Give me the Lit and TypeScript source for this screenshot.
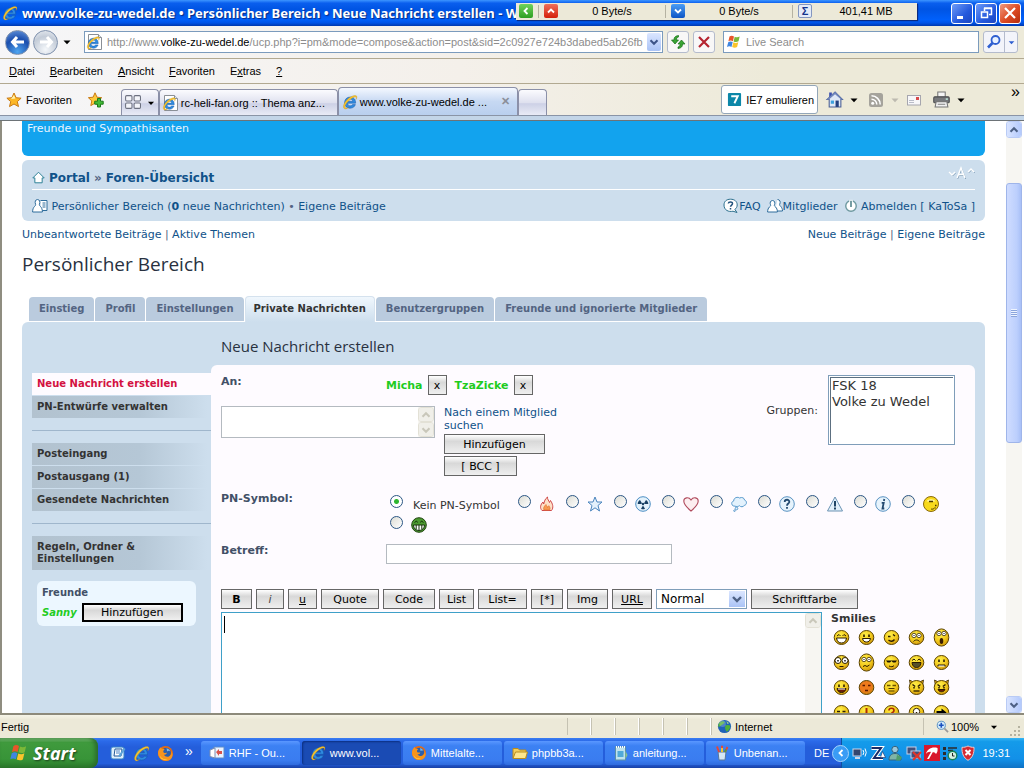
import { LitElement, html, svg, css, nothing } from "lit";
import { customElement, property } from "lit/decorators.js";
import { classMap } from "lit/directives/class-map.js";

/* ---------- shared icon shapes ---------- */

const ieGlyph = svg`
  <path d="M13.6 9.200H5.600c.1 1.700 1.200 2.600 2.700 2.600 1 0 1.800-.4 2.300-1.200h2.800c-.8 2.200-2.600 3.600-5.200 3.600-3.300 0-5.600-2.200-5.600-5.500S4.900 3 8.200 3c3.400 0 5.600 2.400 5.400 6.200zM5.700 7.300h5c-.1-1.400-1.100-2.200-2.500-2.200s-2.300.8-2.500 2.200z" fill="#2f8be0" stroke="#1457a8" stroke-width=".5"/>
  <path d="M2.200 14.600C-.2 12.400 3.400 6.200 8 3.300c3.200-2 6.300-2.400 6.800-1 .3.900-.1 2-.8 3.100.3-1.300.3-2-.3-2.300-1.100-.5-4.300 1-7 3.700-3.200 3.100-4.500 6.300-3 7.200.6.300 1.700 0 2.900-.8-1.600 1.500-3.300 2.300-4.400 1.400z" fill="#f7c530" stroke="#b98212" stroke-width=".3"/>`;

const pageIe = svg`
  <path d="M1.500.5h10l3 3v12h-13z" fill="#fff" stroke="#8a8f96"/>
  <path d="M11.500.5v3h3" fill="#dfe6ee" stroke="#8a8f96"/>
  <g transform="translate(-1 1.500) scale(.9)">${ieGlyph}</g>`;

const flag = svg`
  <path d="M3.500 2.500C5 1.300 6.500 1.500 8 2.400L6.900 7.200C5.500 6.400 4 6.300 2.400 7.300z" fill="#e8562a"/>
  <path d="M8.700 2.700c1.600.8 3.100.9 5-.2l-1.200 4.800c-1.700 1-3.200.9-4.900.1z" fill="#7cb838"/>
  <path d="M2.200 8.200c1.600-1 3-.9 4.500-.1l-1.200 4.900c-1.500-.9-3-.9-4.500 0z" fill="#3f86e0"/>
  <path d="M7.400 8.300c1.600.8 3.100.9 4.900-.1l-1.200 4.900c-1.800 1-3.300.8-4.900 0z" fill="#fbc52c"/>`;

const firefox = svg`
  <circle cx="8" cy="8" r="7" fill="#e66a12"/>
  <circle cx="8.500" cy="7.300" r="4.600" fill="#2a5fae"/>
  <path d="M9 3c1.500.3 3 1.500 3.500 3-1-.7-2-.6-3 0z" fill="#7db7e8"/>
  <path d="M1.300 5.500C2 3.600 3 2.500 3.800 2c0 .7.400 1.300 1 1.700 1.400-.2 2 .1 2.300.7C5.800 5 5.600 6 6.400 7.200c1 .5 2 .2 2.900.2-.2 1.400-1.300 2-2.800 1.800 1 1.900 4 2.600 6 .6 1-1 1.200-2.700.8-4.200 1.500 2 1.800 4.300.7 6.400-1.600 2.900-5.400 3.700-8.500 2.400C2 13 .3 9.300 1.300 5.500z" fill="#f7941d"/>
  <path d="M2.500 9.500c1 3 4 4.700 7.500 3.700-2.500 1.800-7 .8-7.500-3.700z" fill="#fcd34a"/>`;

const globe = svg`
  <circle cx="8" cy="8" r="7" fill="#1f62b8"/>
  <path d="M3 3.500C5 2 7 2 8 3S6.500 5.500 5 6.500 3 9 1.300 8C1.200 6 2 4.500 3 3.500zM9 7c2-1 4-.5 5 0 .5 3-1 5-3.500 6.500C9 12 8 10 9 7z" fill="#4fae3c"/>
  <path d="M10 2l3 2.500-2 .8z" fill="#9fd28a"/>
  <circle cx="6" cy="5" r="3.500" fill="#fff" opacity=".22"/>`;

const icons: Record<string, unknown> = {
  ie: ieGlyph,
  pageIe,
  flag,
  firefox,
  globe,
  star: svg`<path d="M8 1l2.100 4.700 5 .5-3.800 3.400 1.200 5L8 12l-4.500 2.600 1.200-5L.9 6.200l5-.5z" fill="#fdb827" stroke="#c97a14"/><path d="M8 3l1.300 3.400L5 7z" fill="#fff3b0"/>`,
  addStar: svg`<path d="M7 .8l2 4.400 4.700.5-3.500 3.200 1 4.700L7 11.200l-4.200 2.400 1-4.700L.4 5.700l4.700-.5z" fill="#fdc93a" stroke="#c97a14"/><path d="M9.500 6.500h3v2.700h2.700v3h-2.700V15h-3v-2.800H6.700v-3h2.800z" fill="#42bb35" stroke="#1c7a18"/>`,
  quad: svg`<g fill="#f4f5fa" stroke="#6d7180"><rect x="1.500" y="1.500" width="6" height="5" rx="1"/><rect x="9.500" y="1.500" width="6" height="5" rx="1"/><rect x="1.500" y="8.500" width="6" height="5" rx="1"/><rect x="9.500" y="8.500" width="6" height="5" rx="1"/></g>`,
  caret: svg`<path d="M4.500 6.500h7L8 10.200z" fill="currentColor"/>`,
  chevDown: svg`<path d="M4 6l4 4 4-4" fill="none" stroke="currentColor" stroke-width="2.400"/>`,
  chevUp: svg`<path d="M4 10l4-4 4 4" fill="none" stroke="currentColor" stroke-width="2.400"/>`,
  chevLeft: svg`<path d="M10 4L6 8l4 4" fill="none" stroke="currentColor" stroke-width="2.400"/>`,
  refresh: svg`<path d="M8.500 1.500C5 2 4 3.500 4 6H1.500L5 10l3.500-4H6.300c0-1.500.7-2.500 2.200-3z" fill="#3aa535" stroke="#146b16" stroke-width=".7"/><path d="M8 14.500c3.500-.5 4.500-2 4.500-4.500H15l-3.500-4L8 10h2.200c0 1.500-.7 2.500-2.200 3z" fill="#3aa535" stroke="#146b16" stroke-width=".7"/>`,
  stop: svg`<path d="M3 3l10 10M13 3L3 13" stroke="#b52430" stroke-width="2.200"/>`,
  search: svg`<circle cx="9.500" cy="6" r="4" fill="#e8f1ff" stroke="#2f5fd0" stroke-width="1.800"/><path d="M6.500 9L2 13.500" stroke="#2f5fd0" stroke-width="2.600"/>`,
  seven: svg`<rect x="1" y="1" width="14" height="14" rx="1" fill="#0c87a8"/><path d="M4.500 4.500h7l-3.600 7.500" fill="none" stroke="#fff" stroke-width="2"/>`,
  home: svg`<path d="M3 1.500h2.500V5L3 7z" fill="#3a4fb0"/><path d="M8.500 1L1 8h2v7h11V8h1.500z" fill="#dfe8f6" stroke="#4a5f95"/><path d="M8.500.8L.5 8.200h2L8.500 3l6 5.200h1.300z" fill="#7086bd"/><rect x="9" y="9" width="3" height="6" fill="#23407f"/><rect x="4.500" y="9" width="3" height="3" fill="#3ca0dd"/>`,
  rss: svg`<rect x="1" y="1" width="14" height="14" rx="2.500" fill="#a5a39c"/><circle cx="4.700" cy="11.300" r="1.500" fill="#fff"/><path d="M3.500 7.200a5.300 5.300 0 0 1 5.300 5.300M3.500 3.800a8.700 8.700 0 0 1 8.700 8.700" fill="none" stroke="#fff" stroke-width="1.500"/>`,
  mail: svg`<rect x="1.500" y="3.500" width="13" height="9.500" fill="#f7f7f9" stroke="#a6a6ae"/><rect x="10" y="5" width="3" height="3" fill="#d84a4a"/><path d="M3 8.500h5M3 10.500h5" stroke="#b9bcc8"/>`,
  printer: svg`<path d="M4.500 1h7v5h-7z" fill="#f5f5f5" stroke="#777"/><rect x=".7" y="5.500" width="14.600" height="5.500" rx="1" fill="#77797c" stroke="#4c4e50"/><path d="M3 10h10l1 5H2z" fill="#f1f1f1" stroke="#777"/><path d="M4.500 12.500h7" stroke="#888"/><rect x="12" y="7" width="2" height="1.200" fill="#cfe"/>`,
  portal: svg`<path d="M8 1.500L1 8.500h2.500v6h9v-6H15z" fill="#fff" stroke="#2b7f95" stroke-width="1.200" stroke-linejoin="round"/>`,
  ucp: svg`<path d="M8.500 2.500h6.500v10H9" fill="#fff" stroke="#2f6d9c"/><path d="M10.500 5h3M10.500 7h3M10.500 9h3" stroke="#2f6d9c"/><path d="M5.500 1.500C3.300 1.500 2.700 4 3.500 6c.4 1 0 1.600-1 2.500C1.300 9.700.6 11.500.6 14h9.800c0-2.500-.7-4.300-1.900-5.500-1-.9-1.400-1.500-1-2.500.8-2 .2-4.500-2-4.500z" fill="#fff" stroke="#2f6d9c"/>`,
  faq: svg`<path d="M7.500 1.200c4 0 6.700 2.200 6.700 5.700 0 2-1 3.600-2.400 4.500L14 14.500l-4-1.300c-4.500 1-9-1-9-6.200 0-3.500 2.500-5.800 6.500-5.800z" fill="#fff" stroke="#2b6f8d"/><path d="M5.300 5.500C5.500 3.500 9.700 3.500 9.500 5.700 9.400 7 7.500 7.200 7.500 8.800M7.500 10v1.400" fill="none" stroke="#23527c" stroke-width="1.500"/>`,
  members: svg`<path d="M10.500 1.500c2.600 0 3.200 2.500 2.300 4.500-.5 1 0 1.500 1 2.500 1 1.200 1.700 2.500 1.700 4.500H8" fill="#fff" stroke="#2f6d9c"/><path d="M5.500 2.500C3.300 2.500 2.700 5 3.500 6.700c.4 1 0 1.400-1 2.300C1.300 10 .6 11.700.6 14h9.800c0-2.300-.7-4-1.900-5-1-.9-1.400-1.300-1-2.300.8-1.700.2-4.200-2-4.200z" fill="#fff" stroke="#2f6d9c"/>`,
  power: svg`<circle cx="8" cy="8" r="6" fill="#fff" stroke="#6e99a0" stroke-width="1.600"/><path d="M8 1v8" stroke="#fff" stroke-width="4"/><path d="M8 2v7" stroke="#3c737c" stroke-width="1.600"/>`,
  fire: svg`<path d="M3 14.500C.5 12 1.500 8.500 4 6l.7 2C5.500 5 6 3 8.500 1c-.3 2.500 1.500 3.500 2 5.500l1-2c2 3 3.500 7 1 10z" fill="#fde0c8" stroke="#cf4a4a"/><path d="M5 14c-1.200-2 .5-4 2-5.500.3 1.500 1.500 1.500 1.500 3l1.300-1.800C11 11 11.500 13 10.500 14z" fill="#f79a52" stroke="#e07232" stroke-width=".7"/>`,
  starOutline: svg`<path d="M8 1l2 5h5l-4 3.500 1.500 5.500L8 11.800 3.500 15 5 9.500 1 6h5z" fill="#e4f1fc" stroke="#4a84bd" stroke-linejoin="round"/>`,
  radioactive: svg`<circle cx="8" cy="8" r="7.300" fill="#e3f1fb" stroke="#4d8fc4"/><circle cx="8" cy="8" r="1.200" fill="#173f63"/><path d="M7 7.200L5 4C3.500 5 2.700 6.300 2.700 8H6.300zM9 7.200L11 4c1.500 1 2.300 2.300 2.300 4H9.700zM8 9.500l2 3.300c-1.300.7-2.700.7-4 0z" fill="#173f63"/>`,
  heart: svg`<path d="M8 15C5 12.500.8 8.500.8 5 .8 1.500 5.700.5 8 4c2.300-3.500 7.200-2.500 7.200 1 0 3.500-4.200 7.500-7.200 10z" fill="#fdeef0" stroke="#b04a5c" stroke-width="1.100"/>`,
  thought: svg`<path d="M4 10.200C0 10.500-.3 5.500 2.700 5 2.500 1.500 7 .5 8.500 2c2.500-1.200 5 0 5 2 2.700.8 2.500 5 0 5.200-1 2-4 2-5 .5-1.500 1-3 1-4.500.5z" fill="#e3f2fd" stroke="#5a9bcd"/><circle cx="5.500" cy="12.500" r="1.300" fill="#e3f2fd" stroke="#5a9bcd"/><circle cx="3.500" cy="14.700" r=".8" fill="none" stroke="#5a9bcd"/>`,
  question: svg`<circle cx="8" cy="8" r="7.300" fill="#e6f3fc" stroke="#5a93c2"/><path d="M5.700 6C5.700 3 10.500 3 10.300 6 10.200 7.600 8 7.500 8 9.700M8 11v1.800" fill="none" stroke="#234a70" stroke-width="1.800"/>`,
  warning: svg`<path d="M8 1L15.500 15H.5z" fill="#e2f0fa" stroke="#6d94b4" stroke-linejoin="round"/><path d="M8 5v5.500M8 11.500v2" stroke="#173b5d" stroke-width="1.900"/>`,
  info: svg`<circle cx="8" cy="8" r="7.300" fill="#e6f3fc" stroke="#5a93c2"/><path d="M9.300 3l-.4 2M6.700 6.800h2L7.500 12.500h1.800" fill="none" stroke="#234a70" stroke-width="1.800"/>`,
  dizzy: svg`<circle cx="8" cy="8" r="7.500" fill="#f8d91c" stroke="#8a6a0a"/><path d="M3.500 5.500C5 2.500 11 2.500 12.500 5.500z" fill="#fff6a0"/><path d="M6 5.500h4" stroke="#4a3800" stroke-width="1.500"/><path d="M12 9.500h1.500M11.500 12h1" stroke="#4a3800" stroke-width="1.400"/><path d="M8 13c1 .3 2 .2 3-.5" stroke="#4a3800" fill="none"/>`,
  greenGrin: svg`<circle cx="8" cy="8" r="7.300" fill="#4c9a30" stroke="#20440f"/><path d="M3.500 5.500l2-1.500 1 1.500M9.500 5.500l1-1.500 2 1.500" stroke="#16330b" fill="none"/><path d="M2.500 8h11c0 3-2 5.500-5.500 5.500S2.500 11 2.500 8z" fill="#fff" stroke="#16330b"/><path d="M5.200 8v4.500M8 8v5M10.800 8v4.500" stroke="#16330b"/>`,
  magnify: svg`<circle cx="6.500" cy="6.500" r="5" fill="#d4ecfa" stroke="#5a90c0" stroke-width="1.200"/><path d="M10.300 10.300l4.500 4.500" stroke="#9a9a9a" stroke-width="2.200"/><path d="M3.500 6.500h6M6.500 3.500v6" stroke="#1c52c0" stroke-width="2"/>`,
  desktop: svg`<rect x="1" y="2" width="13" height="12" rx="2" fill="#dff0fb" stroke="#3682c4"/><path d="M5 4h7l-1 7H4z" fill="#fff" stroke="#245b99"/><path d="M6 6h4M6 8h4" stroke="#4b86c6"/><path d="M8 11l6-8 1.500 1-5.500 8z" fill="#5ba3da"/>`,
  outlook: svg`<rect x="5" y="2" width="10" height="11" fill="#e9f3ff" stroke="#5d8ccc"/><path d="M1 5l5-2v10l-5-1.500z" fill="#fff" stroke="#7a8db0"/><path d="M7 7l3-3v2h3v3h-3v2z" fill="#d9534a"/>`,
  folder: svg`<path d="M1 3.500h5l1.500 1.500H14V13H1z" fill="#f3cf5c" stroke="#b88b1e"/><path d="M3.500 7h12L13.500 13.500H1z" fill="#fde68d" stroke="#b88b1e"/>`,
  notepad: svg`<rect x="2.500" y="2" width="10" height="13" fill="#bfe2ee" stroke="#5b8fa6"/><path d="M3.500 1v2M5.500 1v2M7.500 1v2M9.500 1v2M11.500 1v2" stroke="#fff"/><path d="M4.500 6h6v6h-6z" fill="#51a9d8"/><path d="M12.500 6l2 4-2 4z" fill="#8bc48b"/>`,
  paint: svg`<path d="M4 7h8l-1 8H5z" fill="#d5e6f5" stroke="#57769c"/><path d="M5 7L3 1.500M8 7V.8M11 7l2.500-5" stroke="#e3483b" stroke-width="2"/><path d="M8 7V3" stroke="#f0c330" stroke-width="2"/><path d="M11 7l1-2.500" stroke="#46a04a" stroke-width="2"/>`,
  network: svg`<rect x="1" y="4" width="8" height="7" fill="#34466e" stroke="#cbd6ea"/><path d="M3 13h5" stroke="#cbd6ea" stroke-width="2"/><path d="M11 5q1.500 2.500 0 5M13 3.500q2.500 4 0 8" stroke="#fff" fill="none"/>`,
  zed: svg`<path d="M1.500 3h9.500L4 13h9" fill="none" stroke="#fff" stroke-width="4"/><path d="M1.500 3h9.500L4 13h9" fill="none" stroke="#1a2b66" stroke-width="2"/><path d="M12.500 6.500l3 6h-5z" fill="#fff" stroke="#1a2b66" stroke-width=".6"/>`,
  buddy: svg`<circle cx="7" cy="4.500" r="3.200" fill="#9cc8dc" stroke="#35627c"/><path d="M1 15c0-4 2-6.500 6-6.500s6 2.500 6 6.500z" fill="#7fb5a8" stroke="#35627c"/><path d="M9 10l5 2-2 3.500H8z" fill="#4f9d6c"/>`,
  netOff: svg`<rect x="1" y="2" width="9" height="7" fill="#41517c" stroke="#c5d0e8"/><rect x="5" y="6" width="9" height="7" fill="#41517c" stroke="#c5d0e8"/><path d="M7 7l8 8M15 7l-8 8" stroke="#e0362c" stroke-width="2.200"/>`,
  umbrella: svg`<rect width="16" height="16" fill="#d8182c"/><path d="M2 9C3 4 8 1.500 13.500 3 14 6 13 8 12 9c-1-1.500-2-2-3.300-1.700L5 14H3l4-7C5 6.500 3 7.500 2 9z" fill="#fff"/>`,
  tasks: svg`<path d="M1 2h3v3H1zM1 7h3v3H1zM1 12h3v3H1z" fill="#2c2c2c"/><path d="M6 3h9M6 5.500h5" stroke="#2c2c2c" stroke-width="1.500"/><circle cx="10.500" cy="10.500" r="4.300" fill="#d7f0e2" stroke="#19825a" stroke-width="1.400"/><path d="M10.500 8v3h2" stroke="#222" fill="none"/>`,
  shield: svg`<path d="M8 1c2 1 4 1.500 6 1.300.3 6-1.500 10.500-6 13-4.500-2.500-6.300-7-6-13C4 2.500 6 2 8 1z" fill="#d62a32" stroke="#f0c8c8"/><path d="M5.500 5l5 5M10.500 5l-5 5" stroke="#fff" stroke-width="2"/>`,
};

@customElement("ui-icon")
export class UiIcon extends LitElement {
  @property() name = "";
  @property({ type: Number }) size = 16;
  static styles = css`
    :host { display: inline-flex; flex: none; }
    svg { display: block; overflow: visible; }
  `;
  render() {
    return html`<svg width=${this.size} height=${this.size} viewBox="0 0 16 16" aria-hidden="true">${icons[this.name] ?? nothing}</svg>`;
  }
}

/* ---------- smilies ---------- */

interface Smiley { label: string; fill?: string; tall?: boolean; horns?: boolean; features: unknown; }

const roundEyes = svg`<circle cx="6" cy="6.500" r="2.200" fill="#fff" stroke="#3a2a00" stroke-width=".8"/><circle cx="11" cy="6.500" r="2.200" fill="#fff" stroke="#3a2a00" stroke-width=".8"/><path d="M6 6v1M11 6v1" stroke="#000"/>`;
const dots = svg`<path d="M6 5.500v2.500M11 5.500v2.500" stroke="#2b1c00" stroke-width="1.600"/>`;
const angry = svg`<path d="M4.500 5.500l2.700 2M12.500 5.500l-2.700 2M6 8v1.500M11 8v1.500" stroke="#2b1c00" stroke-width="1.500"/>`;

const smilies: Smiley[] = [
  { label: "Sehr glücklich", features: svg`<path d="M4 7l2-1.500L7.500 7M9.500 7L11 5.500 13 7" fill="none" stroke="#2b1c00"/><path d="M3.500 9h10c-.5 3.500-2.500 5-5 5s-4.500-1.500-5-5z" fill="#fff" stroke="#2b1c00"/>` },
  { label: "Lächeln", features: svg`${dots}<path d="M4.500 9.500h8c-.5 2.500-2 3.500-4 3.500s-3.500-1-4-3.500z" fill="#fff" stroke="#2b1c00"/>` },
  { label: "Zwinkern", features: svg`<path d="M5 7.500h2.500M10 5.500l2 1.500M5.500 11c2 2 4.500 1.500 6-.5" fill="none" stroke="#2b1c00" stroke-width="1.300"/>` },
  { label: "Traurig", features: svg`${roundEyes}<path d="M5.500 12.500c1.500-2 4.500-2 6 0" fill="none" stroke="#2b1c00"/>` },
  { label: "Überrascht", tall: true, features: svg`<g transform="translate(0 -2)">${roundEyes}</g><ellipse cx="8.500" cy="12" rx="1.800" ry="3" fill="#3a1c00"/>` },
  { label: "Schock", features: svg`<circle cx="5" cy="6.500" r="3" fill="#fff" stroke="#2b1c00"/><circle cx="12" cy="6.500" r="3" fill="#fff" stroke="#2b1c00"/><path d="M5 6v1.500M12 6v1.500" stroke="#000" stroke-width="1.400"/><path d="M6.500 12.500h4" stroke="#2b1c00"/>` },
  { label: "Verwirrt", tall: true, features: svg`<g transform="translate(0 -1)">${roundEyes}</g><path d="M5 12.500l2-1 2 1 2.500-1.500" fill="none" stroke="#2b1c00"/>` },
  { label: "Fetzig", features: svg`<path d="M3 6.500h11l-1.500 2h-2.500L8.500 7 7 8.500H4.500z" fill="#1c1200"/><path d="M6 12c2 1 4 1 5-.5" fill="none" stroke="#2b1c00"/>` },
  { label: "Lachend", features: svg`<path d="M4 6.500l2-1.500 1.500 1.500M9.500 6.500L11 5l2 1.500" fill="none" stroke="#2b1c00"/><path d="M4 8.500h9c-.5 4-2.500 5-4.500 5s-4-1-4.500-5z" fill="#56502a" stroke="#2b1c00"/>` },
  { label: "Verärgert", features: svg`${dots}<path d="M5 12.500V11h7v1.500" fill="#fff" stroke="#2b1c00"/>` },
  { label: "Zunge", features: svg`${dots}<path d="M4 9.500h9c-.5 2.500-2 4-4.500 4s-4-1.500-4.500-4z" fill="#6b1c08" stroke="#2b1c00"/><path d="M5 10h7" stroke="#fff"/>` },
  { label: "Verlegen", fill: "#ee7a1c", features: svg`<path d="M4.500 6.500h2.500M10 6.500h2.500M7 11.500h3" stroke="#5b1a00" stroke-width="1.500"/>` },
  { label: "Augen verdrehend", features: svg`<path d="M4 6.500h3.500M9.500 6.500H13" stroke="#6b5200" stroke-width="1.500"/><path d="M5.500 12h6M5.500 9.500h6" stroke="#4b3800"/>` },
  { label: "Teuflisch", horns: true, features: svg`${angry}<path d="M5.500 12h6" stroke="#2b1c00" stroke-width="1.300"/>` },
  { label: "Verrückter Teufel", horns: true, features: svg`${angry}<path d="M5 10.500c1 3 6 3 7 0z" fill="#6b1c08" stroke="#2b1c00"/>` },
  { label: "Neutral", features: svg`<path d="M4 7.500h3M9.500 7.500h3M5.500 11.500h6" stroke="#2b1c00" stroke-width="1.300"/>` },
  { label: "Ausruf", features: svg`<path d="M8.500 4v5.500M8.500 11v2" stroke="#b02a00" stroke-width="2"/>` },
  { label: "Frage", features: svg`<path d="M6 6.500c0-3 5-3 5 0 0 2-2.500 2-2.500 3.500M8.500 11.500V13" stroke="#b02a00" stroke-width="1.700" fill="none"/>` },
  { label: "Idee", features: svg`<circle cx="8.500" cy="7.500" r="3.200" fill="#fff" stroke="#2b1c00"/><path d="M8.500 8v5" stroke="#2b1c00" stroke-width="1.500"/>` },
  { label: "Pfeil", features: svg`<path d="M3.500 8.500h6" stroke="#000" stroke-width="3"/><path d="M8.500 4.500l5 4-5 4z"/>` },
];

@customElement("smiley-face")
export class SmileyFace extends LitElement {
  @property({ attribute: false }) face!: Smiley;
  static styles = css`
    :host { display: block; }
    svg { display: block; overflow: visible; }
  `;
  render() {
    const f = this.face;
    return html`<svg width="17" height="17" viewBox="0 0 17 17" role="img" aria-label=${f.label}>
      <defs><radialGradient id="g" cx=".4" cy=".3" r=".8"><stop offset="0" stop-color=${f.fill ?? "#fff04a"}/><stop offset=".55" stop-color=${f.fill ?? "#f2c81c"}/><stop offset="1" stop-color="#c48a08"/></radialGradient></defs>
      ${f.horns ? svg`<path d="M1.500 1l5 2.500-4 4zM15.500 1l-5 2.500 4 4z" fill="#d8a012" stroke="#3a2a00" stroke-width=".8"/>` : nothing}
      <ellipse cx="8.500" cy="8.500" rx="7.300" ry=${f.tall ? 8.6 : 7} fill="url(#g)" stroke="#5a4200"/>
      ${f.features}
    </svg>`;
  }
}

/* ---------- window title bar ---------- */

@customElement("title-bar")
export class TitleBar extends LitElement {
  static styles = css`
    :host {
      display: flex; align-items: center; height: 26px; padding: 0 3px 0 2px; gap: 4px;
      background: linear-gradient(#3d95ff 0, #0a5fee 12%, #0054e3 35%, #0060fb 75%, #0053e6 88%, #0038ad 100%);
      font: bold 13px "Noto Sans", sans-serif; color: #fff;
    }
    .title { flex: 1; min-width: 0; overflow: hidden; white-space: nowrap; text-shadow: 1px 1px 1px #0a2a80; line-height: 26px; }
    .meter {
      display: flex; align-items: center; width: 401px; height: 17px; margin: 0 30px 4px -4px; background: #ece9d8;
      font: 11px "Liberation Sans", sans-serif; color: #000; box-shadow: 1px 1px 1px #0a2a80;
    }
    .meter span { flex: 1; text-align: center; }
    .badge { display: flex; align-items: center; justify-content: center; width: 14px; height: 14px; border-radius: 2px; margin: 0 3px; color: #fff; }
    .green { background: linear-gradient(#6fd35c, #2e9e22); }
    .red { background: linear-gradient(#f0705a, #d4200a); }
    .blue { background: linear-gradient(#4a9df5, #0d55c4); }
    .sum { background: #e4ebf8; color: #14348c; font-weight: bold; border: 1px solid #8396c0; width: 12px; height: 12px; }
    .sep { width: 1px; height: 13px; background: #b5b2a2; margin: 0 2px; }
    .buttons { display: flex; gap: 2px; }
    button {
      width: 22px; height: 21px; padding: 0; border: 1px solid #fff; border-radius: 3px; color: #fff;
      display: flex; align-items: center; justify-content: center;
      background: linear-gradient(135deg, #6f9cf8, #2459dd 60%, #1c46c0);
    }
    button.close { background: linear-gradient(135deg, #f09a80, #dc4a22 55%, #b52c0c); }
    svg { display: block; }
  `;
  render() {
    return html`
      <ui-icon name="ie"></ui-icon>
      <div class="title">www.volke-zu-wedel.de • Persönlicher Bereich • Neue Nachricht erstellen - Win</div>
      <div class="meter">
        <div class="badge green"><ui-icon name="chevLeft" size="12"></ui-icon></div><div class="sep"></div>
        <div class="badge red"><ui-icon name="chevUp" size="12"></ui-icon></div><span>0 Byte/s</span><div class="sep"></div>
        <div class="badge blue"><ui-icon name="chevDown" size="12"></ui-icon></div><span>0 Byte/s</span><div class="sep"></div>
        <div class="badge sum">Σ</div><span>401,41 MB</span>
      </div>
      <div class="buttons">
        <button aria-label="Minimieren"><svg width="14" height="14"><path d="M2 10h6v3H2z" fill="#fff"/></svg></button>
        <button aria-label="Verkleinern"><svg width="14" height="14" fill="none" stroke="#fff"><path d="M5.500 5V2.500h7v6H10M5 2h8" stroke-width="1.500"/><path d="M2.500 6h6v5.500h-6zM2 6h7" stroke-width="1.500"/></svg></button>
        <button class="close" aria-label="Schließen"><svg width="14" height="14"><path d="M2 2l10 10M12 2L2 12" stroke="#fff" stroke-width="2.200"/></svg></button>
      </div>`;
  }
}

/* ---------- browser toolbars ---------- */

@customElement("browser-bars")
export class BrowserBars extends LitElement {
  static styles = css`
    :host { display: block; font: 11px "Liberation Sans", sans-serif; color: #000; background: linear-gradient(90deg, #f6f6f8, #f4f0ea 45%, #edead9 75%); }
    button { font: inherit; color: inherit; padding: 0; border: 0; background: none; }
    .row { display: flex; align-items: center; box-sizing: border-box; }
    .address { height: 33px; padding: 0 6px 0 5px; border-bottom: 1px solid #b2a991; }
    .round { display: flex; align-items: center; justify-content: center; width: 25px; height: 25px; border-radius: 50%; border: 1px solid #7f91ad; box-sizing: border-box; }
    .back { background: radial-gradient(circle at 50% 90%, #4fa6f0, #1c4fae 55%, #6b9be0); }
    .forward { background: radial-gradient(circle at 50% 80%, #f4f7fa, #c4ccd8 60%, #eef1f5); margin-left: 3px; }
    .history { display: flex; margin: 0 9px 0 1px; }
    .field { display: flex; align-items: center; box-sizing: border-box; height: 22px; background: #fff; border: 1px solid #7b9bbd; padding-left: 2px; }
    .url { flex: 1; min-width: 0; }
    .find input { flex: 1; min-width: 0; border: 0; padding: 0; margin-left: 4px; font: 11px "Liberation Sans", sans-serif; background: none; color: #8d8d8d; outline: 0; }
    .urltext { flex: 1; min-width: 0; margin-left: 4px; overflow: hidden; white-space: nowrap; color: #8d8d8d; outline: 0; }
    .urltext b { font-weight: normal; color: #000; }
    .drop { display: flex; align-items: center; height: 18px; margin: 0 1px; background: linear-gradient(#dbe6ff, #aac3f6); color: #3d5488; border-radius: 2px; }
    .square { display: flex; align-items: center; justify-content: center; width: 22px; height: 22px; box-sizing: border-box; border: 1px solid #b4bbcc; border-radius: 3px; background: #f8f7f7; margin-left: 4px; }
    .find { width: 256px; margin-left: 8px; }
    .go { width: 35px; display: flex; align-items: center; height: 22px; box-sizing: border-box; border: 1px solid #b4bbcc; border-radius: 3px; margin-left: 4px; background: #f3f4fa; color: #2f5fd0; overflow: hidden; padding-left: 2px; }
    .go .split { width: 1px; height: 20px; background: #b4bbcc; margin-left: 2px; flex: none; }
    .menu { height: 25px; padding: 0 9px; gap: 15px; border-bottom: 1px solid #b2a991; }
    u { text-underline-offset: 1px; }
    .tabs { height: 32px; padding-left: 6px; border-bottom: 1px solid #8a94a6; }
    .fav { display: flex; align-items: center; gap: 4px; }
    .add { display: flex; margin: 0 17px 0 16px; }
    .group, .tab, .blank { align-self: flex-end; box-sizing: border-box; display: flex; align-items: center; border: 1px solid #8b90a8; border-bottom: 0; border-radius: 4px 4px 0 0; background: linear-gradient(#fbfbfe, #dfe1ef 50%, #cdd1e6 55%, #e9ebf6); }
    .group { height: 26px; width: 38px; padding-left: 2px; }
    .group .bar { width: 1px; height: 24px; background: #8b90a8; margin: 0 0 0 3px; }
    .tab { height: 26px; width: 179px; padding: 0 4px 0 3px; gap: 2px; white-space: nowrap; }
    .tab.active { height: 28px; width: 180px; background: linear-gradient(#f4f8ff, #c6d8f2 50%, #b9cfee); }
    .tab span { flex: 1; min-width: 0; }
    .tab button { color: #8b8f99; font-weight: bold; margin-right: 3px; }
    .blank { height: 26px; width: 29px; }
    .spring { flex: 1; }
    .emulate { display: flex; align-items: center; gap: 4px; height: 29px; padding: 0 3px 0 5px; border: 1px solid #93a6b8; border-radius: 3px; background: #fff; box-sizing: border-box; }
    .tools { display: flex; align-items: center; gap: 3px; margin-left: 8px; }
    .faded { color: #bdbab0; }
    .gap { margin-right: 3px; }
    .wide { margin-right: 8px; }
    .more { font: 16px "Liberation Sans", sans-serif; line-height: 16px; align-self: flex-start; margin: 0 4px 0 42px; }
    .strip { height: 5px; background: #c3d5e8; border-bottom: 1px solid #6d7377; box-sizing: border-box; }
  `;
  render() {
    const menu = [["", "D", "atei"], ["", "B", "earbeiten"], ["", "A", "nsicht"], ["", "F", "avoriten"], ["E", "x", "tras"], ["", "?", ""]];
    return html`
      <div class="row address">
        <button class="round back" aria-label="Zurück"><svg width="16" height="14"><path d="M7 2L2.500 7 7 12M3 7h11" stroke="#fff" stroke-width="3" fill="none"/></svg></button>
        <button class="round forward" aria-label="Vorwärts"><svg width="16" height="14"><path d="M9 2l4.500 5L9 12M13 7H2" stroke="#fff" stroke-width="3" fill="none"/></svg></button>
        <button class="history" aria-label="Verlauf"><ui-icon name="caret"></ui-icon></button>
        <div class="field url">
          <ui-icon name="pageIe"></ui-icon>
          <div class="urltext" role="textbox" contenteditable="true" aria-label="Adresse">http://www.<b>volke-zu-wedel.de</b>/ucp.php?i=pm&amp;mode=compose&amp;action=post&amp;sid=2c0927e724b3dabed5ab26fb</div>
          <button class="drop" aria-label="Adressliste"><ui-icon name="chevDown" size="14"></ui-icon></button>
        </div>
        <button class="square" aria-label="Aktualisieren"><ui-icon name="refresh"></ui-icon></button>
        <button class="square" aria-label="Abbrechen"><ui-icon name="stop"></ui-icon></button>
        <div class="field find"><ui-icon name="flag"></ui-icon><input aria-label="Suche" value="Live Search"></div>
        <button class="go" aria-label="Suchen"><ui-icon name="search"></ui-icon><span class="split"></span><ui-icon name="caret" size="13"></ui-icon></button>
      </div>
      <nav class="row menu">${menu.map(([a, k, b]) => html`<button>${a}<u>${k}</u>${b}</button>`)}</nav>
      <div class="row tabs">
        <button class="fav"><ui-icon name="star"></ui-icon>Favoriten</button>
        <button class="add" aria-label="Zu Favoriten hinzufügen"><ui-icon name="addStar"></ui-icon></button>
        <div class="group"><ui-icon name="quad" size="17"></ui-icon><div class="bar"></div><ui-icon name="caret" size="14"></ui-icon></div>
        <div class="tab"><ui-icon name="pageIe"></ui-icon><span>rc-heli-fan.org :: Thema anz...</span></div>
        <div class="tab active"><ui-icon name="ie"></ui-icon><span>www.volke-zu-wedel.de ...</span><button aria-label="Tab schließen">✕</button></div>
        <div class="blank"></div>
        <div class="spring"></div>
        <button class="emulate"><ui-icon name="seven" size="15"></ui-icon>IE7 emulieren</button>
        <div class="tools">
          <ui-icon name="home" size="17"></ui-icon><ui-icon class="gap" name="caret"></ui-icon>
          <ui-icon name="rss"></ui-icon><ui-icon class="faded" name="caret"></ui-icon>
          <ui-icon class="wide" name="mail"></ui-icon>
          <ui-icon name="printer" size="17"></ui-icon><ui-icon name="caret"></ui-icon>
        </div>
        <button class="more" aria-label="Weitere">»</button>
      </div>
      <div class="strip"></div>`;
  }
}

/* ---------- scrollbar ---------- */

@customElement("scroll-track")
export class ScrollTrack extends LitElement {
  @property({ type: Boolean, reflect: true }) disabled = false;
  static styles = css`
    :host { display: flex; flex-direction: column; width: 16px; background: #f7f6f2; flex: none; overflow: hidden; }
    .arrow { display: flex; align-items: center; justify-content: center; height: 17px; padding: 0; border: 1px solid #fff; border-radius: 3px; background: linear-gradient(90deg, #d9e4ff, #b4cafc); color: #4d6185; box-sizing: border-box; outline: 1px solid #b9cbf5; outline-offset: -1px; flex: none; }
    :host([disabled]) .arrow { background: #f0efe9; color: #c9c7ba; outline-color: #e3e1d6; height: 15px; }
    .space { flex: 1; display: flex; flex-direction: column; }
    .before { flex: 45; }
    .thumb { flex: 260; display: flex; align-items: center; justify-content: center; border-radius: 3px; border: 1px solid #9fb5ea; box-sizing: border-box; background: linear-gradient(90deg, #cfdcff, #bccffd 70%, #a9c0f7); }
    .grip { width: 6px; height: 8px; background: repeating-linear-gradient(#eef4ff 0 1px, #8ca5dc 1px 2px); }
    .after { flex: 254; }
  `;
  render() {
    return html`
      <button class="arrow" tabindex="-1" aria-label="Nach oben"><ui-icon name="chevUp" size="14"></ui-icon></button>
      <div class="space">${this.disabled ? nothing : html`<div class="before"></div><div class="thumb"><div class="grip"></div></div><div class="after"></div>`}</div>
      <button class="arrow" tabindex="-1" aria-label="Nach unten"><ui-icon name="chevDown" size="14"></ui-icon></button>`;
  }
}

/* ---------- forum page ---------- */

@customElement("forum-page")
export class ForumPage extends LitElement {
  static styles = css`
    :host { display: block; padding: 0 21px 0 20px; font: 11px/13px "DejaVu Sans", Verdana, sans-serif; color: #536482; background: #fff; }
    a { color: #105289; text-decoration: none; }
    button { font: 11px "DejaVu Sans", sans-serif; color: #000; height: 20px; padding: 0 8px; border: 1px solid #666; background: linear-gradient(#fff, #d8d8d8 35%, #efefef); box-sizing: border-box; }
    .banner { height: 35px; box-sizing: border-box; padding: 1px 5px; background: #12a3ee; color: #e8f5ff; border-radius: 0 0 6px 6px; }
    .navbar { margin-top: 4px; padding: 6px 10px 7px; background: #cddeed; border-radius: 6px; }
    .line { display: flex; justify-content: space-between; align-items: center; }
    .crumbs { height: 23px; border-bottom: 1px solid #fff; font: bold 12px "DejaVu Sans", sans-serif; }
    .crumbs .trail { display: flex; align-items: center; gap: 4px; }
    .fontsize { align-self: flex-start; display: block; }
    .links { padding-top: 8px; height: 16px; }
    .links span, .links a { display: inline-flex; align-items: center; white-space: pre; }
    .links .right { gap: 6px; }
    .search { margin-top: 7px; }
    h2 { margin: 9px 0 0; font: 19px/28px "Open Sans", sans-serif; color: #28313f; }
    .tabs { display: flex; align-items: flex-end; gap: 1px; margin: 18px 0 0 7px; height: 26px; }
    .tabs a { height: 24px; line-height: 23px; padding: 0 10px; margin-bottom: 1px; box-sizing: border-box; background: #bacbde; color: #536482; font-weight: bold; font-size: 10px; border-radius: 4px 4px 0 0; white-space: nowrap; }
    .tabs a.on { height: 26px; line-height: 24px; margin: 0; background: linear-gradient(#f0f7fd, #cddeed); color: #333; border: 1px solid #d5e2ee; border-bottom: 0; padding: 0 8px; }
    .panel { display: grid; grid-template-columns: 179px 1fr; padding: 0 10px; background: #cddeed; border-radius: 6px 6px 0 0; }
    .side { padding-top: 51px; }
    .side a { display: block; padding: 5px; margin-bottom: 1px; font: bold 10px/12px "DejaVu Sans", sans-serif; color: #333; background: linear-gradient(90deg, #b2c2cf, #b5c7d6 60%, #cddeed 98%); }
    .side a.on { background: #fefbff; color: #d31141; }
    .side hr { margin: 12px 0; border: 0; border-top: 1px solid #9fb6cc; }
    .side .wrap { padding-right: 60px; }
    .friends { margin: 11px 15px 0 5px; padding: 5px; background: #ecf7ff; border-radius: 6px; height: 35px; }
    .friends b { font-size: 10px; color: #425067; display: block; }
    .friends div { display: flex; align-items: center; gap: 5px; margin-top: 4px; }
    .friends i { font-weight: bold; font-size: 10px; color: #1fcc1f; }
    .friends button { border: 2px solid #000; height: 19px; width: 101px; padding: 0; }
    h3 { margin: 14px 0 8px 10px; font: 15px/21px "Open Sans", sans-serif; color: #28313f; }
    .card { background: #fefbff; border-radius: 6px 6px 0 0; padding: 10px 10px 0; min-height: 400px; }
    label, .label { font-weight: bold; color: #425067; }
    .top { display: flex; }
    .who { flex: 1; }
    .fields { display: grid; grid-template-columns: 165px 1fr; }
    .people { display: flex; align-items: center; gap: 5px; color: #1fcc1f; font-weight: bold; }
    .people button { width: 19px; padding: 0; margin-right: 3px; }
    .add { display: flex; gap: 9px; margin-top: 11px; align-items: flex-start; }
    .box { display: flex; width: 214px; height: 32px; box-sizing: border-box; border: 1px solid #b4bac0; background: #fff; }
    textarea { flex: 1; min-width: 0; border: 0; padding: 2px; resize: none; outline: 0; overflow: hidden; background: #fff; box-sizing: border-box; font: 12px "DejaVu Sans", sans-serif; }
    .actions { display: flex; flex-direction: column; align-items: flex-start; gap: 2px; width: 130px; }
    .actions .wide { width: 101px; }
    .actions .bcc { width: 73px; }
    .groups { display: flex; align-items: center; gap: 10px; margin-right: 10px; height: 70px; }
    .groups label { font-weight: normal; color: #333; }
    .groups select { width: 127px; height: 70px; padding: 2px 1px; border: 1px solid #7f9db9; box-shadow: inset 0 0 0 1px #fff, inset 1px 1px 0 1px #5c6f80; font: 13px "DejaVu Sans", sans-serif; color: #333; background: #fff; overflow: hidden; border-radius: 0; outline: 0; box-sizing: border-box; }
    option { padding: 0 2px; min-height: 16px; line-height: 16px; }
    .symbols { margin-top: 16px; }
    .choices { display: flex; flex-wrap: wrap; gap: 4px 11px; padding: 3px 0 0 4px; }
    .choice { display: flex; gap: 8px; height: 17px; align-items: flex-end; font-weight: normal; color: #333; }
    .choice:first-child { gap: 10px; width: 117px; }
    input[type="radio"] { appearance: none; width: 13px; height: 13px; margin: 0; align-self: flex-start; border: 1px solid #2b5684; border-radius: 50%; background: linear-gradient(135deg, #dcdcd4, #fff); }
    input[type="radio"]:checked { background: radial-gradient(circle, #2fb62f 0 2px, #fff 3px); }
    .subject { margin-top: 11px; }
    .subject input { width: 286px; height: 20px; box-sizing: border-box; border: 1px solid #b4bac0; background: #fff; padding: 0 2px; }
    .tools { display: flex; gap: 4px; margin-top: 25px; }
    .tools button { padding: 0; }
    .pick { position: relative; display: flex; }
    .pick select { appearance: none; width: 91px; height: 20px; padding: 0 4px; border: 1px solid #7f9db9; border-radius: 0; background: #fff; font: 12px "DejaVu Sans", sans-serif; color: #000; }
    .pick ui-icon { position: absolute; right: 2px; top: 2px; background: linear-gradient(#dbe6ff, #aac3f6); color: #4d6185; pointer-events: none; }
    .compose { display: flex; gap: 9px; margin-top: 3px; }
    .message { position: relative; display: flex; flex: 0 1 601px; height: 220px; box-sizing: border-box; border: 1px solid #3fa0c8; background: #fff; }
    .message textarea { caret-color: transparent; }
    .cursor { position: absolute; left: 2px; top: 3px; width: 1px; height: 17px; background: #000; pointer-events: none; }
    .smilies b { color: #333; display: block; line-height: 13px; }
    .grid { display: grid; grid-template-columns: repeat(5, 17px); gap: 8px; padding: 4px 0 0 2px; }
    .bold { font-weight: bold; }
    .italic { font-style: italic; color: #444; }
    .under { text-decoration: underline; }
  `;
  render() {
    const tabs = ["Einstieg", "Profil", "Einstellungen", "Private Nachrichten", "Benutzergruppen", "Freunde und ignorierte Mitglieder"];
    const symbols = ["fire", "starOutline", "radioactive", "heart", "thought", "question", "warning", "info", "dizzy", "greenGrin"];
    const tools: [string, number, string][] = [["B", 31, "bold"], ["i", 28, "italic"], ["u", 29, "under"], ["Quote", 58, ""], ["Code", 52, ""], ["List", 35, ""], ["List=", 49, ""], ["[*]", 32, ""], ["Img", 41, ""], ["URL", 40, "under"]];
    return html`
      <header class="banner">Freunde und Sympathisanten</header>
      <div class="navbar">
        <div class="line crumbs">
          <div class="trail"><ui-icon name="portal" size="13"></ui-icon><a href="#">Portal</a> » <a href="#">Foren-Übersicht</a></div>
          <svg class="fontsize" width="28" height="16" fill="none"><g stroke="#7f9cb5" transform="translate(.7 .9)"><path d="M2 6l3 3 3-3M21 6l3-3 3 3M10 12l4-10 4 10M12 8.500h4"/></g><path d="M2 6l3 3 3-3M21 6l3-3 3 3M10 12l4-10 4 10M12 8.500h4" stroke="#fff" stroke-width="1.400"/></svg>
        </div>
        <div class="line links">
          <span><ui-icon name="ucp"></ui-icon><a href="#"> Persönlicher Bereich (<b>0</b> neue Nachrichten)</a> • <a href="#">Eigene Beiträge</a></span>
          <span class="right"><a href="#"><ui-icon name="faq"></ui-icon>FAQ</a><a href="#"><ui-icon name="members"></ui-icon>Mitglieder</a><a href="#"> <ui-icon name="power" size="14"></ui-icon> Abmelden [ KaToSa ]</a></span>
        </div>
      </div>
      <div class="line search">
        <span><a href="#">Unbeantwortete Beiträge</a> | <a href="#">Aktive Themen</a></span>
        <span><a href="#">Neue Beiträge</a> | <a href="#">Eigene Beiträge</a></span>
      </div>
      <h2>Persönlicher Bereich</h2>
      <nav class="tabs">${tabs.map((t, i) => html`<a href="#" class=${classMap({ on: i === 3 })}>${t}</a>`)}</nav>
      <div class="panel">
        <aside class="side">
          <a href="#" class="on">Neue Nachricht erstellen</a>
          <a href="#">PN-Entwürfe verwalten</a>
          <hr>
          <a href="#">Posteingang</a>
          <a href="#">Postausgang (1)</a>
          <a href="#">Gesendete Nachrichten</a>
          <hr>
          <a href="#" class="wrap">Regeln, Ordner &amp; Einstellungen</a>
          <div class="friends"><b>Freunde</b><div><i>Sanny</i><button>Hinzufügen</button></div></div>
        </aside>
        <form @submit=${(e: Event) => e.preventDefault()}>
          <h3>Neue Nachricht erstellen</h3>
          <div class="card">
            <div class="top">
              <div class="who">
                <div class="fields">
                  <label for="to">An:</label>
                  <div class="people">Micha<button aria-label="Micha entfernen">x</button> TzaZicke<button aria-label="TzaZicke entfernen">x</button></div>
                </div>
                <div class="add">
                  <div class="box"><textarea id="to"></textarea><scroll-track disabled></scroll-track></div>
                  <div class="actions"><a href="#">Nach einem Mitglied suchen</a><button class="wide">Hinzufügen</button><button class="bcc">[ BCC ]</button></div>
                </div>
              </div>
              <div class="groups"><label for="groups">Gruppen:</label><select id="groups" multiple size="4"><option>FSK 18</option><option>Volke zu Wedel</option></select></div>
            </div>
            <div class="fields symbols">
              <span class="label">PN-Symbol:</span>
              <div class="choices">
                <label class="choice"><input type="radio" name="icon" checked>Kein PN-Symbol</label>
                ${symbols.map(s => html`<label class="choice"><input type="radio" name="icon" aria-label=${s}><ui-icon name=${s}></ui-icon></label>`)}
              </div>
            </div>
            <div class="fields subject"><label for="subject">Betreff:</label><input id="subject" type="text"></div>
            <div class="tools">
              ${tools.map(([t, w, c]) => html`<button class=${c} style="width:${w}px">${t}</button>`)}
              <label class="pick"><select aria-label="Schriftgröße"><option>Normal</option></select><ui-icon name="chevDown"></ui-icon></label>
              <button style="width:107px">Schriftfarbe</button>
            </div>
            <div class="compose">
              <div class="message"><textarea id="message" aria-label="Nachricht"></textarea><span class="cursor"></span><scroll-track disabled></scroll-track></div>
              <div class="smilies"><b>Smilies</b><div class="grid">${smilies.map(f => html`<smiley-face .face=${f}></smiley-face>`)}</div></div>
            </div>
          </div>
        </form>
      </div>`;
  }
}

/* ---------- status bar and task bar ---------- */

@customElement("status-bar")
export class StatusBar extends LitElement {
  static styles = css`
    :host { display: flex; align-items: center; height: 25px; box-sizing: border-box; padding: 0 2px 0 1px; border-top: 2px solid #8d8a7b; background: linear-gradient(#f6f4e8, #ece9d8 20%); font: 11px "Liberation Sans", sans-serif; color: #000; }
    .text { flex: 1; }
    .cell { width: 22px; height: 17px; border-left: 1px solid #c5c2b2; border-right: 1px solid #fff; }
    .zone { display: flex; align-items: center; gap: 3px; width: 206px; padding-left: 5px; border-left: 1px solid #c5c2b2; height: 17px; }
    .zoom { display: flex; align-items: center; gap: 2px; width: 73px; padding: 0 0 0 12px; border-left: 1px solid #c5c2b2; height: 17px; }
    .zoom span { flex: 1; }
    .zoom .drop { margin-right: 8px; }
    svg { align-self: flex-end; }
  `;
  render() {
    return html`<div class="text">Fertig</div>${[0, 1, 2, 3, 4, 5].map(() => html`<div class="cell"></div>`)}
      <div class="zone"><ui-icon name="globe" size="15"></ui-icon>Internet</div>
      <div class="zoom"><ui-icon name="magnify" size="13"></ui-icon><span>100%</span><ui-icon class="drop" name="caret" size="14"></ui-icon></div>
      <svg width="13" height="13" fill="#b5b2a0"><path d="M9 1h2v2H9zM5 5h2v2H5zM9 5h2v2H9zM1 9h2v2H1zM5 9h2v2H5zM9 9h2v2H9z"/></svg>`;
  }
}

@customElement("task-bar")
export class TaskBar extends LitElement {
  static styles = css`
    :host { display: flex; align-items: center; height: 30px; color: #fff; font: 11px "Liberation Sans", sans-serif; background: linear-gradient(#3a7df2 0, #2b6ae9 10%, #245edb 30%, #245edb 85%, #1941a5 100%); }
    button { font: inherit; color: inherit; padding: 0; border: 0; }
    .start { display: flex; align-items: center; gap: 4px; width: 98px; height: 30px; padding-left: 9px; border-radius: 0 8px 8px 0; background: linear-gradient(#7dc07a 0, #3f9a3d 15%, #389438 70%, #2a7a2a 100%); font: italic bold 18px "Open Sans", sans-serif; text-shadow: 1px 1px 2px #1b3f1b; box-shadow: inset -3px 0 4px #2b6b2b; }
    .quick { display: flex; align-items: center; gap: 7px; margin: 0 8px 0 12px; }
    .quick .more { align-self: flex-start; margin-left: 4px; font-size: 14px; line-height: 12px; }
    .tasks { flex: 1; display: flex; gap: 2px; height: 24px; }
    .task { flex: 0 1 99px; display: flex; align-items: center; gap: 4px; padding: 0 8px; background: linear-gradient(#5a97ff, #3c81f3 20%, #3a7cf0 80%, #2f6bdd); border-radius: 3px; overflow: hidden; white-space: nowrap; }
    .task.on { background: #1a4bb4; box-shadow: inset 1px 1px 2px #0c2f80; }
    .lang { width: 27px; margin-left: 8px; }
    .tray { display: flex; align-items: center; justify-content: flex-end; gap: 2px; height: 30px; width: 183px; padding-right: 14px; box-sizing: border-box; background: linear-gradient(#35b5f4 0, #149bea 12%, #1290e8 70%, #0f72c4 100%); border-left: 1px solid #0f4fa0; }
    .expand { display: flex; align-items: center; justify-content: center; width: 17px; height: 17px; border-radius: 50%; background: #3a9cf5; border: 1px solid #a8d4fb; box-sizing: border-box; color: #fff; margin-left: -10px; }
    .icons { flex: 1; display: flex; gap: 2px; margin-left: 1px; }
  `;
  render() {
    const tasks = [["outlook", "RHF - Ou..."], ["ie", "www.vol..."], ["firefox", "Mittelalte..."], ["folder", "phpbb3a..."], ["notepad", "anleitung..."], ["paint", "Unbenan..."]];
    const tray = ["network", "zed", "buddy", "netOff", "umbrella", "tasks", "shield"];
    return html`
      <button class="start"><ui-icon name="flag" size="20"></ui-icon>Start</button>
      <div class="quick"><ui-icon name="desktop"></ui-icon><ui-icon name="ie" size="17"></ui-icon><ui-icon name="firefox" size="17"></ui-icon><span class="more">»</span></div>
      <div class="tasks">${tasks.map(([i, t], n) => html`<button class=${classMap({ task: true, on: n === 1 })}><ui-icon name=${i}></ui-icon>${t}</button>`)}</div>
      <div class="lang">DE</div>
      <div class="tray"><button class="expand" aria-label="Ausgeblendete Symbole"><ui-icon name="chevLeft" size="12"></ui-icon></button><div class="icons">${tray.map(i => html`<ui-icon name=${i}></ui-icon>`)}</div><time>19:31</time></div>`;
  }
}

@customElement("app-root")
export class AppRoot extends LitElement {
  static styles = css`
    :host { display: flex; flex-direction: column; height: 100vh; overflow: hidden; }
    title-bar, browser-bars, status-bar, task-bar { flex: none; }
    .view { flex: 1; min-height: 0; display: flex; background: #fff; border-left: 2px solid #8f8d80; padding-right: 2px; }
    forum-page { flex: 1; min-width: 0; overflow: hidden; }
  `;
  render() {
    return html`<title-bar></title-bar><browser-bars></browser-bars>
      <main class="view"><forum-page></forum-page><scroll-track></scroll-track></main>
      <status-bar></status-bar><task-bar></task-bar>`;
  }
}
